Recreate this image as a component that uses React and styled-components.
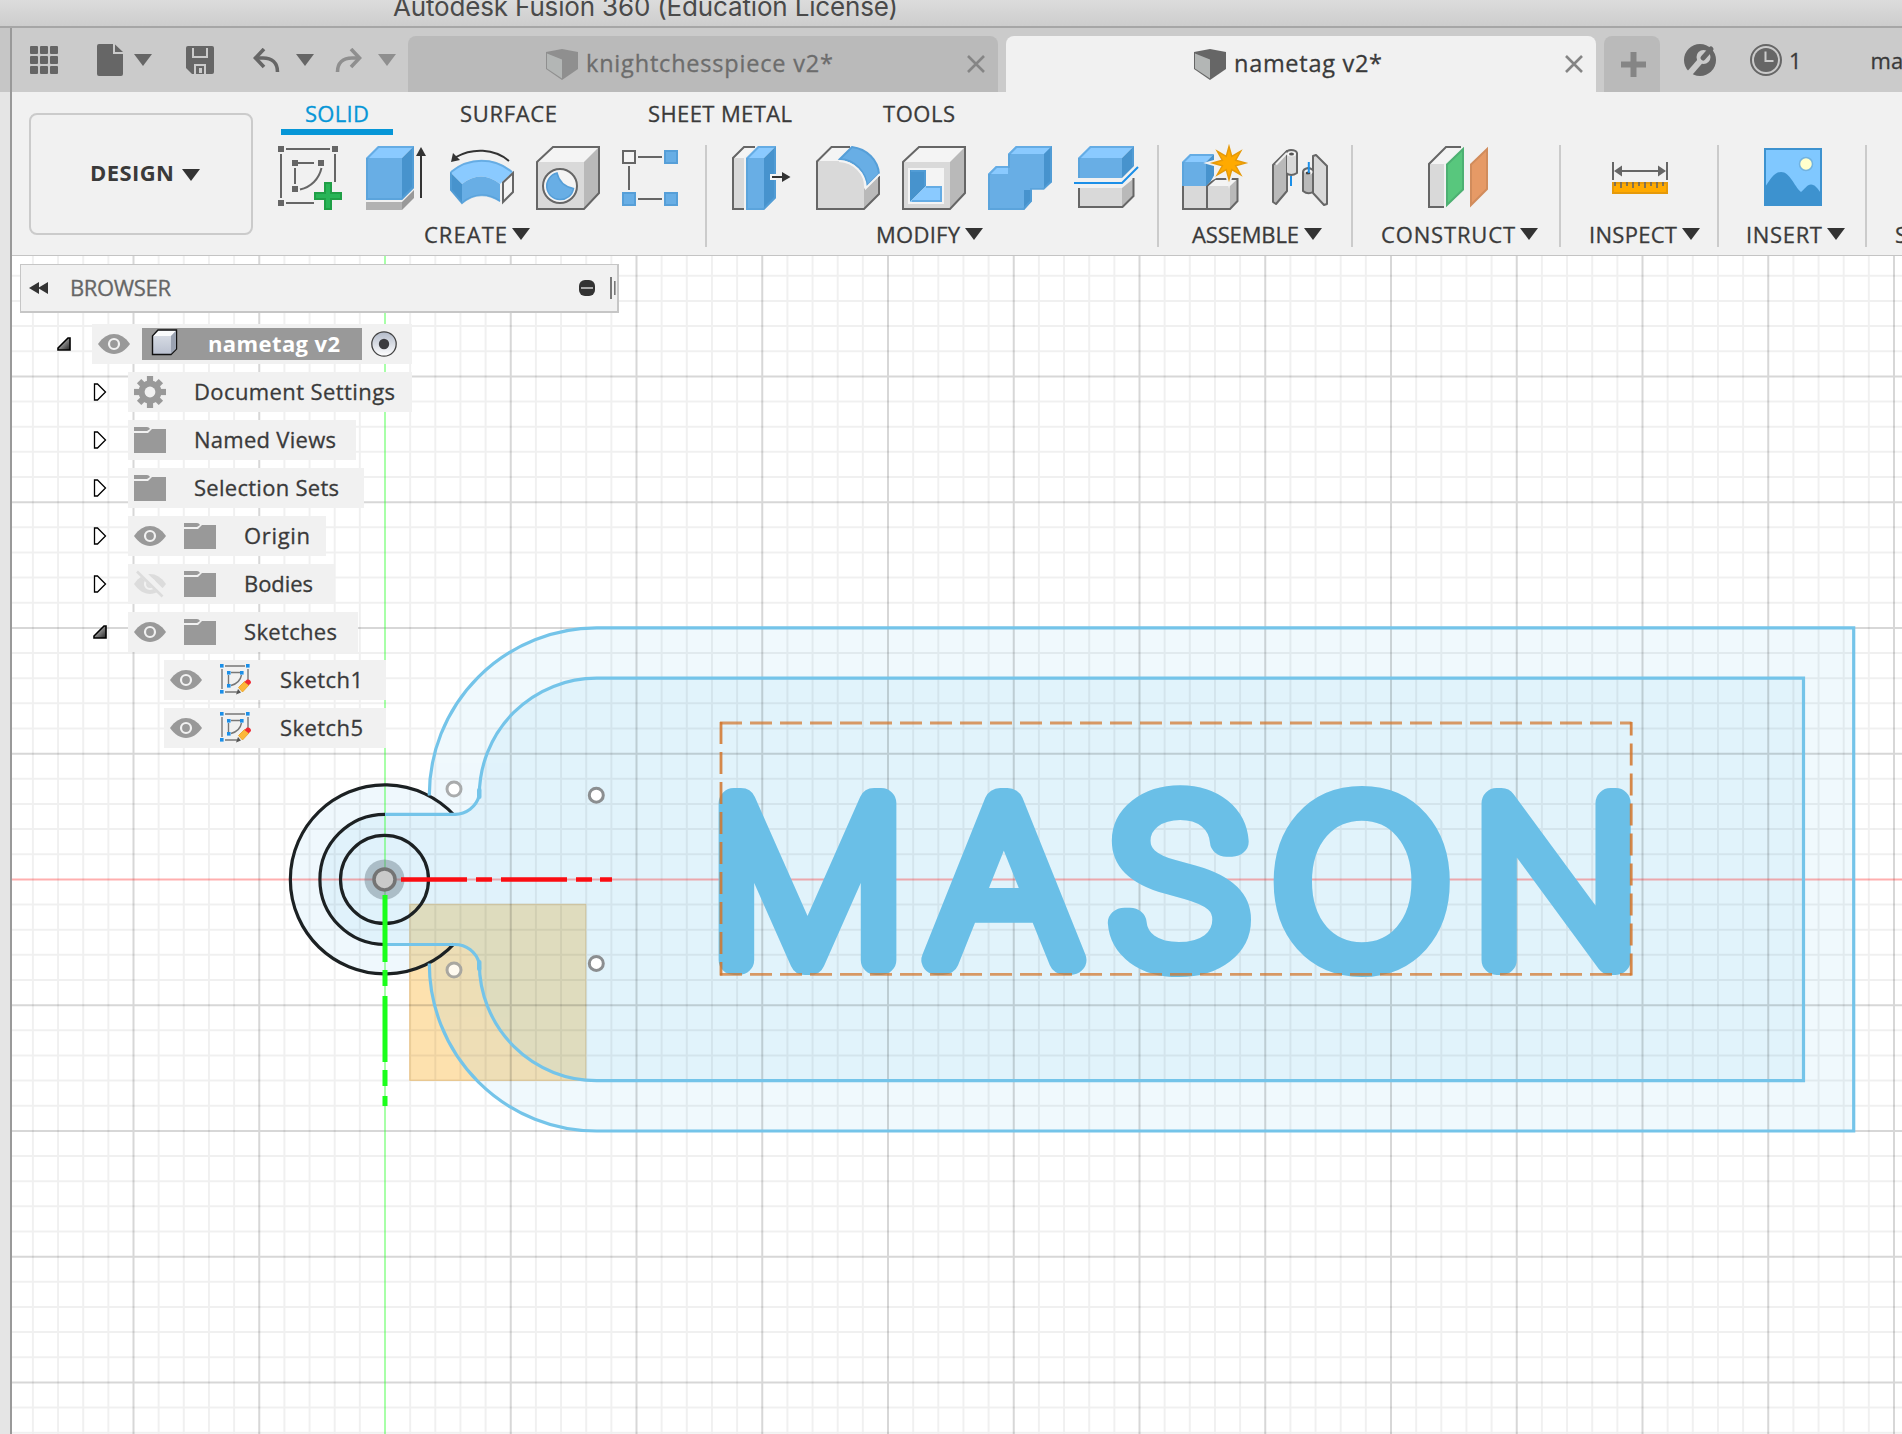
import React, { useLayoutEffect, useRef, useState } from "react";
import styled, { createGlobalStyle } from "styled-components";

const GlobalStyle = createGlobalStyle`
  * { box-sizing: border-box; }
  html, body { margin: 0; padding: 0; background: #fff; }
  body { width: 1902px; height: 1434px; overflow: hidden; }
  svg { display: block; flex: none; }
`;

const ui = `"Open Sans", "Noto Sans", sans-serif`;

/* ---------- text that is tracked out to a fixed measure ---------- */

const FitBox = styled.span`
  display: inline-block;
  flex: none;
  white-space: pre;
`;

function Fit({ w, children }) {
  const ref = useRef(null);
  const [track, setTrack] = useState(0);
  useLayoutEffect(() => {
    const natural = ref.current.getBoundingClientRect().width;
    setTrack((w - natural) / (children.length - 1 || 1));
  }, [w, children]);
  return (
    <FitBox ref={ref} style={{ letterSpacing: `${track}px`, marginRight: `${-track}px` }}>
      {children}
    </FitBox>
  );
}

/* ---------- window frame ---------- */

const Window = styled.div`
  width: 1902px;
  height: 1434px;
  display: flex;
  flex-direction: column;
  overflow: hidden;
  background: #e5e5e5;
  font-family: ${ui};
  font-size: 22px;
  color: #3a3a3a;
  -webkit-text-stroke: 0.3px currentColor;
`;

const TitleBar = styled.header`
  height: 28px;
  flex: none;
  padding-left: 393px;
  background: linear-gradient(#dcdcdc, #cdcdcd);
  border-bottom: 2px solid #a6a6a6;
  font-family: Inter, "Liberation Sans", sans-serif;
  font-size: 26px;
  line-height: 13px;
  color: #4a4a4a;
  -webkit-text-stroke: 0;
`;

const Body = styled.div`
  flex: 1;
  min-height: 0;
  display: flex;
`;

const Gutter = styled.div`
  width: 12px;
  flex: none;
  border-right: 2px solid #999;
  background: linear-gradient(#c6c6c6 64px, #e5e5e5 64px);
`;

const Main = styled.div`
  flex: 1;
  min-width: 0;
  display: flex;
  flex-direction: column;
`;

/* ---------- tab strip ---------- */

const TabStrip = styled.div`
  height: 64px;
  flex: none;
  display: flex;
  align-items: center;
  background: #cbcbcb;
  overflow: hidden;
`;

const Tool = styled.div`
  flex: none;
  margin-left: ${(p) => p.$gap}px;
`;

const DocTab = styled.div`
  flex: none;
  align-self: flex-end;
  width: 590px;
  height: 56px;
  margin-left: ${(p) => p.$gap}px;
  padding: 0 13px 0 ${(p) => p.$indent}px;
  display: flex;
  align-items: center;
  gap: 8px;
  border-radius: 8px 8px 0 0;
  background: ${(p) => (p.$active ? "#f1f1f1" : "#bababa")};
  color: ${(p) => (p.$active ? "#3a3a3a" : "#6c6c6c")};
  font-size: 23.5px;

  & > span { padding-bottom: 2px; }
  & > svg:last-child { margin-left: auto; }
`;

const NewTab = styled.div`
  flex: none;
  align-self: flex-end;
  width: 56px;
  height: 56px;
  margin-left: 8px;
  padding-left: 17px;
  display: flex;
  align-items: center;
  border-radius: 8px 8px 0 0;
  background: #bababa;
`;

/* ---------- ribbon ---------- */

const Ribbon = styled.div`
  height: 164px;
  flex: none;
  display: flex;
  background: #f1f1f1;
  border-bottom: 1px solid #c4c4c4;
`;

const DesignButton = styled.div`
  flex: none;
  width: 224px;
  height: 122px;
  margin: 21px 0 0 17px;
  padding: 0 0 4px 59px;
  display: flex;
  align-items: center;
  gap: 8px;
  border: 2px solid #cbcbcb;
  border-radius: 8px;
  font-weight: 700;
  -webkit-text-stroke: 0;

  & > svg { margin-top: 6px; }
`;

const RibbonTools = styled.div`
  flex: 1;
  min-width: 0;
  overflow: hidden;
`;

const RibbonTabs = styled.div`
  height: 43px;
  padding-left: 28px;
  display: flex;
  gap: 43px;
`;

const RibbonTab = styled.div`
  padding: 6px 24px 0;
  line-height: 30px;
  border-bottom: 6px solid ${(p) => (p.$active ? "#0696d7" : "transparent")};
  color: ${(p) => (p.$active ? "#0696d7" : "#3a3a3a")};
`;

const Groups = styled.div`
  margin-top: 10px;
  display: flex;
`;

const Group = styled.section`
  flex: none;
  width: ${(p) => p.$width}px;
  height: 102px;
  border-right: 2px solid #cbcbcb;
`;

const Icons = styled.div`
  height: 65px;
  padding: 1px 0 0 ${(p) => p.$indent}px;
  display: flex;
  gap: 22px;
`;

const Caption = styled.div`
  height: 30px;
  margin-top: 9px;
  padding-left: ${(p) => p.$indent}px;
  display: flex;
  align-items: center;
  gap: 5px;
  white-space: nowrap;
`;

/* ---------- canvas and browser tree ---------- */

const Canvas = styled.main`
  flex: 1;
  min-height: 0;
  position: relative;
  background: #fff;
  overflow: hidden;
`;

const Drawing = styled.svg`
  position: absolute;
  inset: 0;
  -webkit-text-stroke: initial;
`;

const Browser = styled.aside`
  position: relative;
  width: 600px;
  padding: 8px 0 0 8px;
`;

const BrowserHeader = styled.div`
  width: 599px;
  height: 49px;
  padding: 0 1px 0 8px;
  display: flex;
  align-items: center;
  border: 1px solid #c6c6c6;
  border-width: 1px 2px 2px 1px;
  background: #f1f1f1;
  color: #666;

  & > span { margin-left: 22px; padding-bottom: 2px; }
  & > svg:nth-last-child(2) { margin-left: auto; margin-right: 15px; }
`;

const Tree = styled.div`
  padding-top: 11px;
  display: flex;
  flex-direction: column;
  gap: 8px;
`;

const Row = styled.div`
  height: 40px;
  padding-left: ${(p) => p.$indent}px;
  display: flex;
  align-items: center;
`;

const Twisty = styled.div`
  width: 35px;
  flex: none;
`;

const RowBody = styled.div`
  width: ${(p) => p.$width}px;
  height: 40px;
  padding-left: 6px;
  display: flex;
  align-items: center;
  gap: 18px;
  background: #f1f1f1;

  & > span { margin-left: 10px; padding-bottom: 2px; }
`;

const Selected = styled.div`
  width: 220px;
  height: 32px;
  margin: 0 -9px 0 -6px;
  padding-left: 9px;
  display: flex;
  align-items: center;
  background: #999;
  color: #fff;
  font-weight: 700;
  -webkit-text-stroke: 0;

  & > svg { margin: -4px 30px 0 0; }
  & > span { padding-bottom: 2px; }
`;

/* ---------- small glyphs ---------- */

const Down = ({ color = "#333" }) => (
  <svg width="18" height="12"><path d="M0 0H18L9 12Z" fill={color} /></svg>
);

const Close = () => (
  <svg width="18" height="18" stroke="#858585" strokeWidth="2.6"><path d="M1 1L17 17M17 1L1 17" /></svg>
);

const TabCube = ({ dark, light }) => (
  <svg width="32" height="31">
    <path d="M0 3L16 0L32 3V20L16 31L0 20Z" fill={dark} />
    <path d="M1 4.5L16 10.5V29.5L1 19.5Z" fill={light} />
  </svg>
);

const GridIcon = () => (
  <svg width="28" height="28" fill="#666">
    {[0, 10, 20].map((y) => [0, 10, 20].map((x) => (
      <rect key={`${x}-${y}`} x={x} y={y} width="8" height="8" rx="1" />
    )))}
  </svg>
);

const FileIcon = () => (
  <svg width="26" height="32" fill="#666">
    <path d="M2 0H16V10H26V30Q26 32 24 32H2Q0 32 0 30V2Q0 0 2 0Z" />
    <path d="M18 0.5L26 8H18Z" />
  </svg>
);

const SaveIcon = () => (
  <svg width="28" height="28">
    <path d="M2 0H26Q28 0 28 2V26Q28 28 26 28H6L0 22V2Q0 0 2 0Z" fill="#666" />
    <path d="M7 2V11H21V2M9 28V19H19V28" fill="none" stroke="#cbcbcb" strokeWidth="2" />
    <rect x="13" y="22" width="3" height="5" fill="#cbcbcb" />
  </svg>
);

const UndoIcon = ({ color, flip }) => (
  <svg width="27" height="24" fill="none" stroke={color} strokeWidth="3.6">
    <g transform={flip ? "translate(27 0) scale(-1 1)" : undefined}>
      <path d="M11 1L2.5 10L11 19" />
      <path d="M3 10H10C19 10 24.5 15 24.5 24" />
    </g>
  </svg>
);

const WrenchIcon = () => (
  <svg width="32" height="32">
    <circle cx="16" cy="16" r="16" fill="#666" />
    <circle cx="19.5" cy="13" r="7" fill="#cbcbcb" />
    <path d="M18 15L5 30" stroke="#cbcbcb" strokeWidth="6" />
    <path d="M19 14L27 5" stroke="#666" strokeWidth="5" strokeLinecap="round" />
  </svg>
);

const ClockIcon = () => (
  <svg width="32" height="32">
    <circle cx="16" cy="16" r="15" fill="none" stroke="#666" strokeWidth="2" />
    <circle cx="16" cy="16" r="12" fill="#666" />
    <path d="M15.5 7.5V17H23.5" fill="none" stroke="#cbcbcb" strokeWidth="2" />
  </svg>
);

const Collapse = () => (
  <svg width="19" height="12" fill="#333"><path d="M0 6L10 0V12ZM9 6L19 0V12Z" /></svg>
);

const MinusDot = () => (
  <svg width="16" height="16">
    <rect width="16" height="16" rx="6" fill="#333" />
    <rect x="2" y="7" width="12" height="2" fill="#aaa" />
  </svg>
);

const Handle = () => (
  <svg width="6" height="22" fill="#777"><rect width="2" height="22" /><rect x="4" y="4" width="1.6" height="14" /></svg>
);

const Opened = () => (
  <svg width="14" height="14">
    <defs>
      <linearGradient id="tw" x1="0" y1="0" x2="1" y2="1">
        <stop offset="0.3" stopColor="#aaa" /><stop offset="1" stopColor="#222" />
      </linearGradient>
    </defs>
    <path d="M1 13V11L11 1H13V13Z" fill="url(#tw)" stroke="#000" strokeWidth="1.6" />
  </svg>
);

const Closed = () => (
  <svg width="14" height="18"><path d="M1.500 1H4.500L12.500 9L4.500 17H1.500Z" fill="#fff" stroke="#000" strokeWidth="1.3" /></svg>
);

const Eye = () => (
  <svg width="32" height="20">
    <path d="M0 10C9 -3.3 23 -3.3 32 10C23 23.3 9 23.3 0 10Z" fill="#999" />
    <circle cx="16" cy="10" r="5" fill="#999" stroke="#f1f1f1" strokeWidth="2.2" />
  </svg>
);

const EyeOff = () => (
  <svg width="32" height="28">
    <path d="M0 14C9 0.7 23 0.7 32 14C23 27.3 9 27.3 0 14Z" fill="#dcdcdc" />
    <circle cx="16" cy="14" r="5" fill="none" stroke="#f1f1f1" strokeWidth="2.2" />
    <path d="M5 0L31 25.5" stroke="#f1f1f1" strokeWidth="7" />
    <path d="M3 1.5L28.5 26.5" stroke="#dcdcdc" strokeWidth="2.6" />
  </svg>
);

const Folder = () => (
  <svg width="32" height="26" fill="#999">
    <path d="M0 0H13Q15 0 16 2L13 4H0Z" />
    <path d="M0 6H14L18 2H32V26H0Z" />
  </svg>
);

const Gear = () => (
  <svg width="32" height="32">
    {[0, 45, 90, 135].map((a) => (
      <rect key={a} x="12.900" y={a % 90 ? 0.6 : 0} width="6.200" height={a % 90 ? 30.8 : 32} fill="#999" transform={`rotate(${a} 16 16)`} />
    ))}
    <circle cx="16" cy="16" r="11.500" fill="#999" />
    <circle cx="16" cy="16" r="5.400" fill="#f1f1f1" />
  </svg>
);

const NodeCube = () => (
  <svg width="27" height="27">
    <defs>
      <linearGradient id="nc" x1="0" y1="0" x2="0" y2="1">
        <stop offset="0" stopColor="#dfe3ea" /><stop offset="1" stopColor="#b9c0cf" />
      </linearGradient>
    </defs>
    <path d="M1.500 7L7 1H25.500V20L20 25.500H1.500Z" fill="url(#nc)" stroke="#111" strokeWidth="1.4" />
    <path d="M2.500 7L7.500 2H24.500L20 7Z" fill="#fafbfc" />
    <path d="M20 7L24.800 2V20L20 24.800Z" fill="#9aa2b1" />
  </svg>
);

const Radio = () => (
  <svg width="26" height="26">
    <defs>
      <linearGradient id="rd" x1="0" y1="0" x2="0" y2="1">
        <stop offset="0" stopColor="#b3bbca" /><stop offset="1" stopColor="#ffffff" />
      </linearGradient>
    </defs>
    <circle cx="13" cy="13" r="12.2" fill="url(#rd)" stroke="#444" strokeWidth="1.3" />
    <circle cx="13" cy="13" r="5.2" fill="#3c3c40" />
  </svg>
);

const SketchNode = () => (
  <svg width="32" height="32">
    <g fill="none" stroke="#777" strokeWidth="1.4">
      <path d="M5 2H25M2 5V25M28 5V18M5 28H17" />
      <path d="M11 8.500H20M8.500 11V20M21.500 11Q20 19 11 21.500" />
    </g>
    <g fill="#1b8fe8">
      <rect width="3.6" height="3.6" /><rect x="26" width="3.6" height="3.6" /><rect y="26" width="3.6" height="3.6" />
      <rect x="7" y="7" width="3.6" height="3.6" /><rect x="20" y="7" width="3.6" height="3.6" /><rect x="7" y="20" width="3.6" height="3.6" />
    </g>
    <path d="M18.500 23.500L24.500 17.500L29 21L22.500 28Z" fill="#fcb73a" stroke="#e8a020" strokeWidth="0.8" />
    <path d="M24.500 18L27 15.500Q31 15 31 19L28.800 21.200Z" fill="#f02b33" />
    <path d="M18 25L21 28.500L16 30.500Z" fill="#555" />
  </svg>
);

/* ---------- ribbon icons ---------- */

const F = "#68aee5", T = "#8acaff", S = "#4793cd", E = "#569fd8";
const GF = "#d9d9d9", GT = "#f4f4f4", GS = "#b9b9b9", GE = "#666";

const Icon = ({ children }) => <svg width="64" height="64" overflow="visible">{children}</svg>;

const SketchIcon = () => (
  <Icon>
    <g fill={GE}>
      {[[0, 0], [54, 0], [0, 54], [14, 14], [40, 14], [14, 40]].map(([x, y]) => (
        <rect key={`${x}.${y}`} x={x} y={y} width="6" height="6" />
      ))}
    </g>
    <g fill="none" stroke={GE} strokeWidth="2">
      <path d="M8 3H52M3 8V52M57 8V36M8 57H36M19 17H36M17 22V38M43.500 22C41 33 33 41 22 43.500" />
    </g>
    <path d="M47 37H53V47H63V53H53V63H47V53H37V47H47Z" fill="#28b557" stroke="#1f9f46" strokeWidth="2" />
  </Icon>
);

const ExtrudeIcon = () => (
  <Icon>
    <path d="M2 12H38V54H2Z" fill={F} />
    <path d="M2 12L14 0H50L38 12Z" fill={T} />
    <path d="M38 12L50 0V42L38 54Z" fill={S} />
    <path d="M3 12.500L14.500 1H49V41.500L37.500 53H3Z" fill="none" stroke={E} strokeWidth="2" opacity="0.7" />
    <path d="M2 56H38V64H2Z" fill="#b2b2b2" />
    <path d="M38 56L50 44V52L38 64Z" fill="#999" />
    <path d="M57 52V8" stroke="#333" strokeWidth="2" />
    <path d="M52 10L57 1L62 10Z" fill="#333" />
  </Icon>
);

const RevolveIcon = () => (
  <Icon>
    <path d="M59 15C44 2 22 2 6 11" fill="none" stroke="#333" strokeWidth="2" />
    <path d="M1 16L3 7L10 14Z" fill="#333" />
    <path d="M0 26C18 10 45 10 63 26L50 38C38 28 24 28 12 38Z" fill={T} />
    <path d="M0 26L12 38V58L0 44Z" fill={S} />
    <path d="M12 38C24 28 38 28 50 38V56C38 47 24 47 12 58Z" fill={F} />
    <path d="M1 26C19 11 44 11 62 26M1 26V44L12 57C24 47 38 47 50 55" fill="none" stroke={E} strokeWidth="2" opacity="0.7" />
    <path d="M53 36.500L63 27V46L53 56Z" fill={GT} stroke={GE} strokeWidth="2" />
  </Icon>
);

const Box = ({ children }) => (
  <Icon>
    <path d="M1 16H48V63H1Z" fill={GF} />
    <path d="M1 16L17 1H63L48 16Z" fill={GT} />
    <path d="M48 16L63 1V47L48 63Z" fill={GS} />
    <path d="M1 16L17 1H63V47L48 63H1Z" fill="none" stroke={GE} strokeWidth="2" />
    {children}
  </Icon>
);

const HoleIcon = () => (
  <Box>
    <circle cx="24" cy="40" r="17" fill={GT} stroke={GE} strokeWidth="2" />
    <path d="M21 27A13.500 13.500 0 1 0 37.500 42.500Q24 40 21 27Z" fill={F} stroke={E} strokeWidth="1.500" />
  </Box>
);

const ShellIcon = () => (
  <Box>
    <path d="M6 22H42V58H6Z" fill={GT} />
    <path d="M8 24H24V40L8 56Z" fill={S} />
    <path d="M8 56L24 40H40V56Z" fill={T} />
    <path d="M9 25H23V40M24 41H39V55H10" fill="none" stroke={E} strokeWidth="2" opacity="0.7" />
  </Box>
);

const PatternIcon = () => (
  <Icon>
    <g strokeWidth="2">
      <rect x="1" y="5" width="12" height="12" fill={GT} stroke={GE} />
      <rect x="43" y="5" width="12" height="12" fill={F} stroke={E} />
      <rect x="1" y="47" width="12" height="12" fill={F} stroke={E} />
      <rect x="43" y="47" width="12" height="12" fill={F} stroke={E} />
      <path d="M16 11H40M16 53H40M7 20V44" stroke={GE} />
    </g>
  </Icon>
);

const PressPullIcon = () => (
  <Icon>
    <path d="M3 12H14V63H3Z" fill={GF} />
    <path d="M3 12L14 1H25L14 12Z" fill={GT} />
    <path d="M14 63H3V12L14 1H25" fill="none" stroke={GE} strokeWidth="2" />
    <path d="M16 12H34V64H16Z" fill={F} />
    <path d="M16 12L28 0H46L34 12Z" fill={T} />
    <path d="M34 12L46 0V52L34 64Z" fill={S} />
    <path d="M17 12.500L28.500 1H45V51.500L33.500 63H17Z" fill="none" stroke={E} strokeWidth="2" opacity="0.7" />
    <path d="M40 28H46V34H40Z" fill={GT} />
    <path d="M42 31H54" stroke="#333" strokeWidth="2" />
    <path d="M52 26L60.500 31L52 36Z" fill="#333" />
  </Icon>
);

const FilletIcon = () => (
  <Icon>
    <path d="M1 15H24Q48 17 48 41V63H1Z" fill={GF} />
    <path d="M1 15L15 1H34L23 15Z" fill={GT} />
    <path d="M48 43L63 30V48L48 63Z" fill={GS} />
    <path d="M34 1H15.500L1 15.500V63H48L63 48V30" fill="none" stroke={GE} strokeWidth="2" />
    <path d="M36 1C51 3 62 14 63 28L51 40C50 26 39 14 24 13Z" fill={F} stroke={E} strokeWidth="2" />
    <path d="M23 15C38 16 49 27 50 42L64 28" fill="none" stroke={GT} strokeWidth="2" />
  </Icon>
);

const CombineIcon = () => (
  <Icon>
    <path d="M0 28L8 20H20V8L28 0H64V36L56 43H44V55L36 64H0Z" fill={F} />
    <path d="M0 28L8 20H20V28ZM20 8L28 0H64L56 8Z" fill={T} />
    <path d="M56 8L64 0V36L56 43ZM36 44H44V55L36 64Z" fill={S} />
    <path d="M1 28.500L8.500 21H21V8.500L28.500 1H63V35.500L55.500 43H43V55L35.500 63H1Z" fill="none" stroke={E} strokeWidth="2" opacity="0.7" />
  </Icon>
);

const SplitIcon = () => (
  <Icon>
    <path d="M4 12H48V32H4Z" fill={F} />
    <path d="M4 12L16 0H60L48 12Z" fill={T} />
    <path d="M48 12L60 0V20L48 32Z" fill={S} />
    <path d="M5 32V12.500L16.500 1H59V20" fill="none" stroke={E} strokeWidth="2" opacity="0.7" />
    <path d="M0 37H48L64 21" fill="none" stroke="#1b8fe8" strokeWidth="2" />
    <path d="M5 42H48V61H5Z" fill={GF} />
    <path d="M48 42L59 33V50L48 61Z" fill={GS} />
    <path d="M5 42V61H48.500L59.500 50V32" fill="none" stroke={GE} strokeWidth="2" />
  </Icon>
);

const starPoints = Array.from({ length: 16 }, (_, i) => {
  const r = i % 2 ? 7.2 : 16.5;
  const a = (i * Math.PI) / 8 - Math.PI / 2;
  return `${47 + r * Math.cos(a)},${17 + r * Math.sin(a)}`;
}).join(" ");

const ComponentIcon = () => (
  <Icon>
    <path d="M1 40H48V63H1Z" fill={GF} />
    <path d="M25 40L33 33H55L48 40Z" fill={GT} />
    <path d="M48 40L55.500 33V55L48 63Z" fill={GS} />
    <path d="M1 40V63H48L55.500 55V33H33L25 40V63" fill="none" stroke={GE} strokeWidth="2" />
    <path d="M0 16H24V40H0Z" fill={F} />
    <path d="M0 16L8 8H32L24 16Z" fill={T} />
    <path d="M24 16L32 8V32L24 40Z" fill={S} />
    <path d="M1 40V16.500L8.500 9H31" fill="none" stroke={E} strokeWidth="2" opacity="0.7" />
    <polygon points={starPoints} fill="#ffaa00" stroke="#f1f1f1" strokeWidth="5" />
    <polygon points={starPoints} fill="#ffaa00" stroke="#e69a0a" strokeWidth="1.500" />
  </Icon>
);

const JointIcon = () => (
  <Icon>
    <g stroke={GE} strokeWidth="2" strokeLinejoin="round">
      <path d="M5 19L19 5V45L8 58L5 56Z" fill={GS} />
      <path d="M18 7V27Q23 31 29 27V7Q28 4 23 4Q19 4 18 7Z" fill={GF} />
      <path d="M48 9L59 20V58L56 59L45 47V10Z" fill={GF} />
      <path d="M35 26V45Q40 49 45 46V26Q44 22 40 22Q35 23 35 26Z" fill={GS} />
    </g>
    <path d="M6.500 20L18 9V44L7 55Z" fill={GS} />
    <path d="M8 18.500L19 7" stroke="#f1f1f1" strokeWidth="2" />
    <ellipse cx="23.500" cy="8" rx="4.500" ry="2.500" fill={GT} />
    <ellipse cx="23.500" cy="8" rx="2.500" ry="1.500" fill="#555" />
    <ellipse cx="40.500" cy="26" rx="4" ry="2.500" fill={GT} />
    <ellipse cx="40" cy="27" rx="2.500" ry="1.500" fill="#444" />
    <path d="M23 30V40M40.800 16V27" stroke="#1b8fe8" strokeWidth="2" />
  </Icon>
);

const PlaneIcon = () => (
  <Icon>
    <path d="M1 18H16V61H1Z" fill={GF} />
    <path d="M1 18L18 1H34L17 18Z" fill={GT} />
    <path d="M16 61H1V18L18 1H33" fill="none" stroke={GE} strokeWidth="2" />
    <path d="M19 18.500L35 3V43.500L19 59Z" fill="#58c77d" stroke="#4db072" strokeWidth="2" />
    <path d="M43 18.500L59 3V43L43 59Z" fill="#e69a66" stroke="#d18c5c" strokeWidth="2" />
  </Icon>
);

const MeasureIcon = () => (
  <Icon>
    <path d="M1 16V34M55 16V34M6 25H50" stroke={GE} strokeWidth="2" />
    <path d="M2 25L10 19.500V30.500ZM54 25L46 19.500V30.500Z" fill={GE} />
    <rect x="1" y="37" width="54" height="10" fill="#ffaa00" stroke="#e69a0a" strokeWidth="2" />
    <path d="M3 36V40M9 36V42M15 36V40M21 36V42M27 36V40M33 36V42M39 36V40M45 36V42M51 36V40" stroke={GE} strokeWidth="1.600" />
  </Icon>
);

const ImageIcon = () => (
  <Icon>
    <rect x="1" y="3" width="56" height="56" fill="#80c8ff" stroke="#3d92cf" strokeWidth="2" />
    <circle cx="42" cy="18" r="6.500" fill="#ffffcc" stroke="#72b3e0" strokeWidth="1.500" />
    <path d="M1 41C6 34 10 26 17 26C26 26 30 40 37 46C41 43 43 38.500 47 38.500C51 38.500 53 42 57 47V59H1Z" fill="#3d92cf" />
  </Icon>
);

/* ---------- sketch canvas ---------- */

const OX = 385, OY = 879.4, STEP = 25.15;

function gridPath(major) {
  let d = "";
  for (let i = -40; i <= 64; i++) {
    if ((i % 5 === 0) !== major || i === 0) continue;
    const x = OX + i * STEP;
    const y = OY + i * STEP;
    if (x > 12 && x < 1902) d += `M${x.toFixed(2)} 256V1434`;
    if (y > 256 && y < 1434) d += `M12 ${y.toFixed(2)}H1902`;
  }
  return d;
}

const outer = "M429.300 795.400A167.500 167.500 0 0 1 596.600 627.900H1853.700V1131H596.600A167.500 167.500 0 0 1 429.300 963.500";
const inner = "M385 814.300H454A25 25 0 0 0 479.300 795.200A117.300 117.300 0 0 1 596.600 678.200H1803.500V1080.600H596.600A117.300 117.300 0 0 1 479.300 963.600A25 25 0 0 0 454 944.500H385";

/* letter, x of its origin, horizontal stretch */
const nameText = [["M", 709, 1.02], ["A", 930, 1.07], ["S", 1106, 1.11], ["O", 1273, 1.1], ["N", 1472, 1.01]];
const NAME_SIZE = 216;

function NameText() {
  const [widths, setWidths] = useState(null);
  useLayoutEffect(() => {
    const ctx = document.createElement("canvas").getContext("2d");
    ctx.font = `100 ${NAME_SIZE}px Inter`;
    setWidths(nameText.map(([ch, , stretch]) => ctx.measureText(ch).width * stretch));
  }, []);
  return (
    <text
      y="960"
      fontFamily="Inter, sans-serif"
      fontWeight="100"
      fontSize={NAME_SIZE}
      fill="#6abfe7"
      stroke="#6abfe7"
      strokeWidth="30"
      strokeLinejoin="round"
      strokeLinecap="round"
    >
      {nameText.map(([ch, x], i) => (
        <tspan key={ch} x={x} textLength={widths ? widths[i] : undefined} lengthAdjust="spacingAndGlyphs">{ch}</tspan>
      ))}
    </text>
  );
}

function SketchCanvas() {
  return (
    <Drawing width="1890" height="1178" viewBox="12 256 1890 1178">
      <rect x="409.800" y="904.300" width="176" height="176" fill="#fde1ae" stroke="#f5cd8a" />
      <g fill="#8bcdf0" opacity="0.13">
        <circle cx={OX} cy={OY} r="94.500" />
        <path d={`${outer}V795Z`} />
      </g>
      <path d={`${inner}A65.100 65.100 0 0 1 385 814.300Z`} fill="#8bcdf0" fillOpacity="0.15" />
      <path d={gridPath(false)} stroke="#000" strokeOpacity="0.06" strokeWidth="2" />
      <path d={gridPath(true)} stroke="#000" strokeOpacity="0.155" strokeWidth="2" />
      <path d={`M12 ${OY}H1902`} stroke="#ff2020" strokeOpacity="0.36" strokeWidth="2" />
      <path d={`M${OX} 256V1434`} stroke="#30ff30" strokeOpacity="0.42" strokeWidth="2" />

      <g fill="none" stroke="#1c2123" strokeWidth="3.200">
        <circle cx={OX - 0.5} cy={OY} r="44" />
        <path d="M385 814.300A65.100 65.100 0 0 0 385 944.500" />
        <path d="M454 815A94.500 94.500 0 1 0 454 943.800" />
      </g>
      <g fill="none" stroke="#74c4e9" strokeWidth="3.200">
        <path d={outer} />
        <path d={inner} />
      </g>
      <g fill="#74c4e9">
        <rect x="477" y="788" width="4.500" height="11" rx="2" />
        <rect x="477" y="960" width="4.500" height="11" rx="2" />
      </g>

      <g fill="#fff" stroke="#8b8e90" strokeWidth="3">
        <circle cx="596.300" cy="795.200" r="7" />
        <circle cx="596.300" cy="963.400" r="7" />
        <circle cx="454" cy="789" r="7" stroke="#a9abac" />
        <circle cx="454" cy="970" r="7" fill="#fffaf0" stroke="#a9a7a0" />
      </g>

      <circle cx="384.500" cy={OY} r="20" fill="#6b7d87" fillOpacity="0.45" />
      <circle cx="384.500" cy={OY} r="10.500" fill="#c9c9c9" stroke="#747474" strokeWidth="3.500" />
      <path d="M401 879.500H467M476 879.500H492M501 879.500H567M576 879.500H592M600 879.500H612" stroke="#fb0d12" strokeWidth="4.500" />
      <path d="M385 895V962M385 970V986M385 996V1062M385 1070V1086M385 1096V1106" stroke="#1bff1b" strokeWidth="5" />

      <NameText />

      <g fill="none" stroke="#d2742a" strokeDasharray="22 8" strokeWidth="2.800">
        <path d="M720 723H1631.500M720 974.300H1631.500" strokeOpacity="0.72" />
        <path d="M721 722V975.500M1631.200 975.500V722" strokeOpacity="0.85" />
      </g>
    </Drawing>
  );
}

/* ---------- data ---------- */

const groups = [
  { name: "CREATE", w: 83, width: 454, icons: [SketchIcon, ExtrudeIcon, RevolveIcon, HoleIcon, PatternIcon], pad: 25, cap: 171 },
  { name: "MODIFY", w: 84, width: 452, icons: [PressPullIcon, FilletIcon, ShellIcon, CombineIcon, SplitIcon], pad: 23, cap: 169 },
  { name: "ASSEMBLE", w: 107, width: 194, icons: [ComponentIcon, JointIcon], pad: 23, cap: 33 },
  { name: "CONSTRUCT", w: 134, width: 208, icons: [PlaneIcon], pad: 75, cap: 28 },
  { name: "INSPECT", w: 88, width: 158, icons: [MeasureIcon], pad: 51, cap: 28 },
  { name: "INSERT", w: 76, width: 148, icons: [ImageIcon], pad: 45, cap: 27 },
  { name: "SELECT", w: 78, width: 160, icons: [], pad: 0, cap: 28 },
];

const nodes = [
  { text: "Document Settings", w: 201, indent: 73, width: 284, icons: [Gear] },
  { text: "Named Views", w: 142, indent: 73, width: 228, icons: [Folder] },
  { text: "Selection Sets", w: 145, indent: 73, width: 236, icons: [Folder] },
  { text: "Origin", w: 66, indent: 73, width: 198, icons: [Eye, Folder] },
  { text: "Bodies", w: 69, indent: 73, width: 206, icons: [EyeOff, Folder] },
  { text: "Sketches", w: 93, indent: 73, width: 230, icons: [Eye, Folder], open: true },
  { text: "Sketch1", w: 83, indent: 109, width: 222, icons: [Eye, SketchNode], leaf: true },
  { text: "Sketch5", w: 83, indent: 109, width: 222, icons: [Eye, SketchNode], leaf: true },
];

export default function App() {
  return (
    <Window>
      <GlobalStyle />
      <TitleBar><Fit w={505}>Autodesk Fusion 360 (Education License)</Fit></TitleBar>
      <Body>
        <Gutter />
        <Main>
          <TabStrip>
            <Tool $gap={18}><GridIcon /></Tool>
            <Tool $gap={39}><FileIcon /></Tool>
            <Tool $gap={11}><Down color="#666" /></Tool>
            <Tool $gap={34}><SaveIcon /></Tool>
            <Tool $gap={39}><UndoIcon color="#666" /></Tool>
            <Tool $gap={16}><Down color="#666" /></Tool>
            <Tool $gap={21}><UndoIcon color="#8f8f8f" flip /></Tool>
            <Tool $gap={16}><Down color="#8f8f8f" /></Tool>
            <DocTab $gap={12} $indent={138}>
              <TabCube dark="#8f8f8f" light="#b3b6b5" />
              <Fit w={247}>knightchesspiece v2*</Fit>
              <Close />
            </DocTab>
            <DocTab $gap={8} $indent={188} $active>
              <TabCube dark="#666" light="#b3b6b5" />
              <Fit w={148}>nametag v2*</Fit>
              <Close />
            </DocTab>
            <NewTab>
              <svg width="25" height="25" fill="#858585"><path d="M9.500 0H15.500V9.500H25V15.500H15.500V25H9.500V15.500H0V9.500H9.500Z" /></svg>
            </NewTab>
            <Tool $gap={24}><WrenchIcon /></Tool>
            <Tool $gap={34}><ClockIcon /></Tool>
            <Tool $gap={7}><Fit w={13}>1</Fit></Tool>
            <Tool $gap={69}>mason</Tool>
          </TabStrip>

          <Ribbon>
            <DesignButton><Fit w={84}>DESIGN</Fit><Down /></DesignButton>
            <RibbonTools>
              <RibbonTabs>
                <RibbonTab $active><Fit w={64}>SOLID</Fit></RibbonTab>
                <RibbonTab><Fit w={97}>SURFACE</Fit></RibbonTab>
                <RibbonTab><Fit w={144}>SHEET METAL</Fit></RibbonTab>
                <RibbonTab><Fit w={72}>TOOLS</Fit></RibbonTab>
              </RibbonTabs>
              <Groups>
                {groups.map((g) => (
                  <Group key={g.name} $width={g.width}>
                    <Icons $indent={g.pad}>{g.icons.map((I, i) => <I key={i} />)}</Icons>
                    <Caption $indent={g.cap}><Fit w={g.w}>{g.name}</Fit><Down /></Caption>
                  </Group>
                ))}
              </Groups>
            </RibbonTools>
          </Ribbon>

          <Canvas>
            <SketchCanvas />
            <Browser>
              <BrowserHeader>
                <Collapse />
                <Fit w={101}>BROWSER</Fit>
                <MinusDot />
                <Handle />
              </BrowserHeader>
              <Tree>
                <Row $indent={37}>
                  <Twisty><Opened /></Twisty>
                  <RowBody $width={320}>
                    <Eye />
                    <Selected><NodeCube /><Fit w={132}>nametag v2</Fit></Selected>
                    <Radio />
                  </RowBody>
                </Row>
                {nodes.map((n) => (
                  <Row key={n.text} $indent={n.indent}>
                    <Twisty>{n.leaf ? null : n.open ? <Opened /> : <Closed />}</Twisty>
                    <RowBody $width={n.width}>
                      {n.icons.map((I, i) => <I key={i} />)}
                      <Fit w={n.w}>{n.text}</Fit>
                    </RowBody>
                  </Row>
                ))}
              </Tree>
            </Browser>
          </Canvas>
        </Main>
      </Body>
    </Window>
  );
}
